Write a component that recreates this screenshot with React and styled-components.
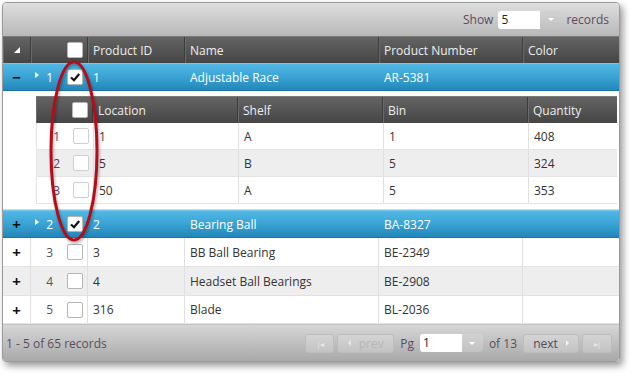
import React from 'react'
import styled, { createGlobalStyle, css } from 'styled-components'

const OUTER_COLS = '28px 57px 97px 194px 144px 1fr'
const INNER_COLS = '57px 145px 145px 145px 1fr'

const GlobalStyle = createGlobalStyle`
  body {
    margin: 0;
    background: #fff;
    font-family: "Open Sans", "Noto Sans", Arial, sans-serif;
    font-size: 12px;
    color: #333;
  }
`

const Page = styled.div`
  position: relative;
  width: 635px;
  height: 377px;
  padding: 2px 0 0 2px;
  box-sizing: border-box;
`

const Grid = styled.div`
  width: 618px;
  border: 1px solid #9a9a9a;
  border-radius: 4px;
  overflow: hidden;
  box-sizing: border-box;
  box-shadow: 3px 4px 7px rgba(0, 0, 0, 0.4);
`

const Toolbar = styled.div`
  height: 33px;
  display: flex;
  align-items: center;
  justify-content: flex-end;
  gap: 5px;
  padding-right: 10px;
  background: linear-gradient(#dedede, #b8b8b8);
  color: #5b4d5d;
`

const Combo = styled.div`
  display: flex;
  align-items: center;
  height: 18px;
`

const ComboInput = styled.div`
  width: ${p => p.$w}px;
  height: 18px;
  background: #fff;
  border-radius: 3px 0 0 3px;
  padding-left: 3px;
  box-sizing: border-box;
  color: #222;
  line-height: 18px;
`

const ComboButton = styled.div`
  width: 21px;
  height: 18px;
  border-radius: 0 4px 4px 0;
  background: linear-gradient(#d2d2d2, #c2c2c2);
  display: flex;
  align-items: center;
  justify-content: center;
  &::after {
    content: '';
    border-left: 3px solid transparent;
    border-right: 3px solid transparent;
    border-top: 3px solid #fff;
  }
`

const HeaderRow = styled.div`
  display: grid;
  grid-template-columns: ${p => p.$cols};
  height: ${p => p.$h}px;
  background: linear-gradient(#646464, #454545);
  color: #eee;
  border-top: 1px solid #7a7a7a;
  box-sizing: border-box;
`

const HeadCell = styled.div`
  display: flex;
  align-items: center;
  justify-content: ${p => p.$align || 'flex-start'};
  padding-left: ${p => (p.$align ? 0 : 5)}px;
  border-right: 1px solid #3c3c3c;
  box-shadow: inset 1px 0 0 #6a6a6a;
  &:last-child { border-right: none; }
`

const Row = styled.div`
  display: grid;
  grid-template-columns: ${OUTER_COLS};
  height: ${p => p.$h}px;
  box-sizing: border-box;
  ${p => p.$selected
    ? css`
      background: linear-gradient(#52b8e4, #3aa3d4 50%, #2287b8);
      color: #fff;
      border-top: 1px solid #75c8ec;
      border-bottom: 1px solid #1b75a2;
    `
    : css`
      background: ${p.$alt ? '#eeeeee' : '#fff'};
      border-bottom: 1px solid #e2e2e2;
    `}
`

const Cell = styled.div`
  display: flex;
  align-items: center;
  padding-left: 5px;
  border-right: 1px solid ${p => (p.$selected ? 'transparent' : '#e0e0e0')};
  &:last-child { border-right: none; }
`

const ToggleCell = styled(Cell)`
  justify-content: center;
  padding-left: 0;
  font-weight: bold;
  font-size: 15px;
  color: #111;
`

const NumCell = styled(Cell)`
  padding-left: 0;
  justify-content: flex-end;
`

const RowNum = styled.span`
  width: 24px;
  text-align: right;
  margin-right: 14px;
  color: ${p => (p.$selected ? '#fff' : '#555')};
`

const Arrow = styled.span`
  position: relative;
  &::before {
    content: '';
    position: absolute;
    left: -11px;
    top: 3px;
    border-top: 3px solid transparent;
    border-bottom: 3px solid transparent;
    border-left: 4px solid #fff;
  }
`

const Box = styled.div`
  width: 16px;
  height: 16px;
  box-sizing: border-box;
  border: 1px solid ${p => (p.$faint ? '#cfcfcf' : '#b5b5b5')};
  border-radius: 2px;
  background: #fff;
  margin-right: 4px;
  flex: none;
  display: flex;
  align-items: center;
  justify-content: center;
`

const DetailRow = styled.div`
  background: #fff;
  padding: 5px 2px 5px 33px;
  border-bottom: 1px solid #d4d4d4;
`

const InnerRow = styled.div`
  display: grid;
  grid-template-columns: ${INNER_COLS};
  height: 27px;
  box-sizing: border-box;
  background: ${p => (p.$alt ? '#eeeeee' : '#fff')};
  border-bottom: 1px solid #e4e4e4;
  border-left: 1px solid #e4e4e4;
`

const InnerNum = styled.span`
  width: 22px;
  text-align: right;
  margin-right: 13px;
  color: #4a3f66;
`

const Footer = styled.div`
  height: 36px;
  display: flex;
  align-items: center;
  justify-content: space-between;
  padding: 0 7px 0 3px;
  background: linear-gradient(#d6d6d6, #a9a9a9);
  border-top: 1px solid #c4c4c4;
  color: #5b4d5d;
`

const Pager = styled.div`
  display: flex;
  align-items: center;
  gap: 3px;
`

const PagerButton = styled.div`
  height: 19px;
  width: ${p => p.$w}px;
  box-sizing: border-box;
  border: 1px solid #bdbdbd;
  border-radius: 3px;
  background: linear-gradient(#d4d4d4, #c3c3c3);
  color: ${p => (p.$disabled ? '#b7b7b7' : '#4a4a5a')};
  font-size: 12px;
  display: flex;
  align-items: center;
  justify-content: center;
  gap: 8px;
`

const Tri = styled.span`
  border-top: 3px solid transparent;
  border-bottom: 3px solid transparent;
  ${p => (p.$left
    ? css`border-right: 3px solid ${p.$c};`
    : css`border-left: 3px solid ${p.$c};`)}
`

const EdgeIcon = styled.span`
  font-size: 8px;
  color: #e8e8e8;
  letter-spacing: -1px;
`

const PagerText = styled.span`
  margin: 0 3px;
`

const Annotation = styled.svg`
  position: absolute;
  left: 45px;
  top: 56px;
  overflow: visible;
  pointer-events: none;
`

function Check({ checked, faint }) {
  return (
    <Box $faint={faint}>
      {checked && (
        <svg width="12" height="12" viewBox="0 0 12 12">
          <path d="M2 6.5 L5 9.2 L10.2 3" fill="none" stroke="#111" strokeWidth="2.2" />
        </svg>
      )}
    </Box>
  )
}

const outerRows = [
  { n: 1, id: '1', name: 'Adjustable Race', num: 'AR-5381', selected: true, open: true, h: 28 },
  { n: 2, id: '2', name: 'Bearing Ball', num: 'BA-8327', selected: true, h: 28 },
  { n: 3, id: '3', name: 'BB Ball Bearing', num: 'BE-2349', h: 29 },
  { n: 4, id: '4', name: 'Headset Ball Bearings', num: 'BE-2908', alt: true, h: 29 },
  { n: 5, id: '316', name: 'Blade', num: 'BL-2036', h: 28 },
]

const innerRows = [
  { n: 1, loc: '1', shelf: 'A', bin: '1', qty: '408' },
  { n: 2, loc: '5', shelf: 'B', bin: '5', qty: '324', alt: true },
  { n: 3, loc: '50', shelf: 'A', bin: '5', qty: '353' },
]

function Detail() {
  return (
    <DetailRow>
      <HeaderRow $cols={INNER_COLS} $h={27}>
        <HeadCell $align="flex-end"><Check /></HeadCell>
        <HeadCell>Location</HeadCell>
        <HeadCell>Shelf</HeadCell>
        <HeadCell>Bin</HeadCell>
        <HeadCell>Quantity</HeadCell>
      </HeaderRow>
      {innerRows.map(r => (
        <InnerRow key={r.n} $alt={r.alt}>
          <NumCell><InnerNum>{r.n}</InnerNum><Check faint /></NumCell>
          <Cell>{r.loc}</Cell>
          <Cell>{r.shelf}</Cell>
          <Cell>{r.bin}</Cell>
          <Cell>{r.qty}</Cell>
        </InnerRow>
      ))}
    </DetailRow>
  )
}

export default function App() {
  return (
    <Page>
      <GlobalStyle />
      <Grid>
        <Toolbar>
          <span>Show</span>
          <Combo>
            <ComboInput $w={42}>5</ComboInput>
            <ComboButton />
          </Combo>
          <span>records</span>
        </Toolbar>

        <HeaderRow $cols={OUTER_COLS} $h={27}>
          <HeadCell $align="center">
            <svg width="6" height="6" viewBox="0 0 6 6"><polygon points="6,0 6,6 0,6" fill="#fff" /></svg>
          </HeadCell>
          <HeadCell $align="flex-end"><Check /></HeadCell>
          <HeadCell>Product ID</HeadCell>
          <HeadCell>Name</HeadCell>
          <HeadCell>Product Number</HeadCell>
          <HeadCell>Color</HeadCell>
        </HeaderRow>

        {outerRows.map(r => (
          <React.Fragment key={r.n}>
            <Row $selected={r.selected} $alt={r.alt} $h={r.h}>
              <ToggleCell $selected={r.selected}>{r.open ? '−' : '+'}</ToggleCell>
              <NumCell $selected={r.selected}>
                <RowNum $selected={r.selected}>
                  {r.selected ? <Arrow>{r.n}</Arrow> : r.n}
                </RowNum>
                <Check checked={r.selected} />
              </NumCell>
              <Cell $selected={r.selected}>{r.id}</Cell>
              <Cell $selected={r.selected}>{r.name}</Cell>
              <Cell $selected={r.selected}>{r.num}</Cell>
              <Cell $selected={r.selected} />
            </Row>
            {r.open && <Detail />}
          </React.Fragment>
        ))}

        <Footer>
          <span>1 - 5 of 65 records</span>
          <Pager>
            <PagerButton $w={29} $disabled><EdgeIcon>|◂</EdgeIcon></PagerButton>
            <PagerButton $w={57} $disabled><Tri $left $c="#e8e8e8" />prev</PagerButton>
            <PagerText>Pg</PagerText>
            <Combo>
              <ComboInput $w={42}>1</ComboInput>
              <ComboButton />
            </Combo>
            <PagerText>of 13</PagerText>
            <PagerButton $w={56}>next<Tri $c="#f4f4f4" /></PagerButton>
            <PagerButton $w={30} $disabled><EdgeIcon>▸|</EdgeIcon></PagerButton>
          </Pager>
        </Footer>
      </Grid>

      <Annotation width="60" height="190" viewBox="0 0 60 190">
        <defs>
          <filter id="sh" x="-30%" y="-10%" width="160%" height="120%">
            <feDropShadow dx="1" dy="2" stdDeviation="1.5" floodColor="#000" floodOpacity="0.35" />
          </filter>
        </defs>
        <ellipse cx="29" cy="95" rx="23" ry="89" fill="none" stroke="#b1101a" strokeWidth="3" filter="url(#sh)" />
      </Annotation>
    </Page>
  )
}
